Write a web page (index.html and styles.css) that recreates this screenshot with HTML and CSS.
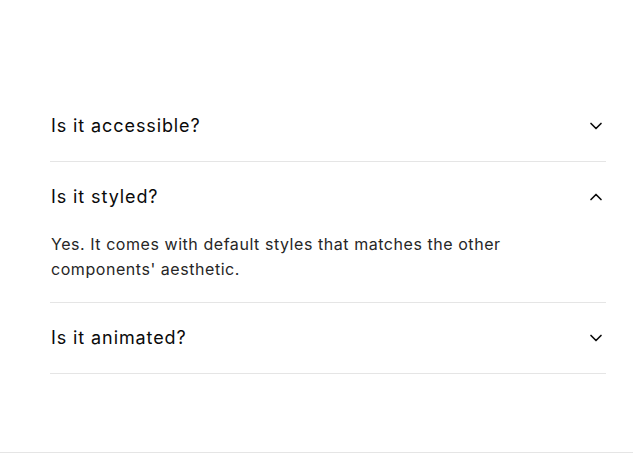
FILE: index.html
```html
<!DOCTYPE html>
<html lang="en">
<head>
<meta charset="utf-8">
<link rel="stylesheet" href="styles.css">
</head>
<body>
<main class="page">
  <div class="accordion">
    <div class="item">
      <button class="trigger">
        <span>Is it accessible?</span>
        <svg class="chev" viewBox="0 0 24 24" fill="none" stroke="currentColor" stroke-width="2" stroke-linecap="round" stroke-linejoin="round"><path d="m6 9 6 6 6-6"/></svg>
      </button>
    </div>
    <div class="item open">
      <button class="trigger">
        <span>Is it styled?</span>
        <svg class="chev" viewBox="0 0 24 24" fill="none" stroke="currentColor" stroke-width="2" stroke-linecap="round" stroke-linejoin="round"><path d="m6 15 6-6 6 6"/></svg>
      </button>
      <div class="content">Yes. It comes with default styles that matches the other components' aesthetic.</div>
    </div>
    <div class="item">
      <button class="trigger">
        <span>Is it animated?</span>
        <svg class="chev" viewBox="0 0 24 24" fill="none" stroke="currentColor" stroke-width="2" stroke-linecap="round" stroke-linejoin="round"><path d="m6 9 6 6 6-6"/></svg>
      </button>
    </div>
  </div>
</main>
</body>
</html>
```

FILE: styles.css
```css
* { box-sizing: border-box; }
html, body { margin: 0; padding: 0; background: #fff; }
body { font-family: Inter, "Noto Sans", sans-serif; color: #0a0a0a; }
.page {
  height: 453px;
  border-bottom: 1px solid #e5e5e5;
  padding: 91px 27px 0 50px;
}
.accordion { display: flex; flex-direction: column; }
.item { border-bottom: 1px solid #e5e5e5; }
.trigger {
  all: unset;
  box-sizing: border-box;
  width: 100%;
  display: flex;
  align-items: center;
  justify-content: space-between;
  padding: 21px 0 21px 1px;
  font-family: Inter, "Noto Sans", sans-serif;
  font-size: 18px;
  line-height: 28px;
  font-weight: 400;
  letter-spacing: 0.9px;
  color: #0a0a0a;
  cursor: pointer;
}
.chev { width: 20px; height: 20px; color: #0a0a0a; flex-shrink: 0; }
.content {
  padding: 0 0 20px 1px;
  font-size: 16px;
  line-height: 25px;
  letter-spacing: 0.55px;
  color: #262626;
  max-width: 525px;
}
```
